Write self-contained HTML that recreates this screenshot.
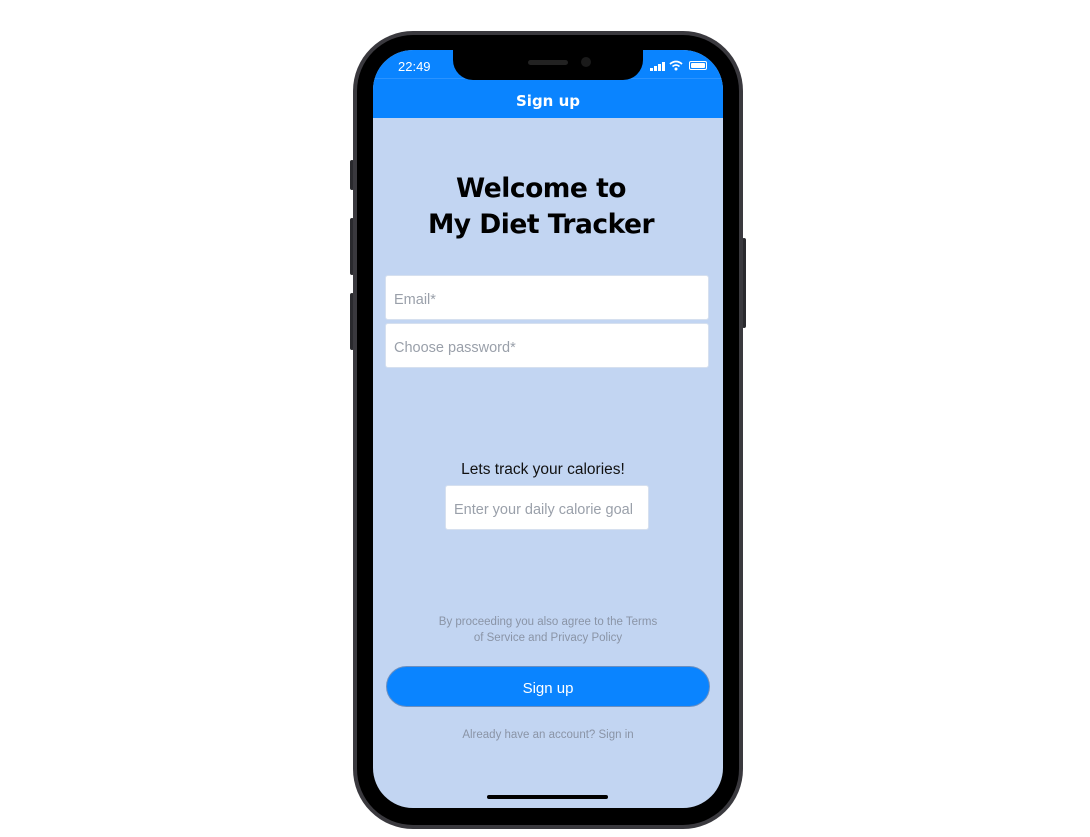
<!DOCTYPE html>
<html><head><meta charset="utf-8"><style>
*{margin:0;padding:0;box-sizing:border-box}
body{width:1090px;height:837px;background:#fff;position:relative;overflow:hidden;font-family:"Liberation Sans",sans-serif}
.btn{position:absolute;background:#2a2a2e;border-radius:2px}
.outer{position:absolute;left:353px;top:31px;width:390px;height:798px;border-radius:60px;background:#3a393e}
.bezel{position:absolute;left:357px;top:35px;width:382px;height:790px;border-radius:56px;background:#000}
.screen{position:absolute;left:373px;top:50px;width:350px;height:758px;border-radius:40px;background:#c2d5f2;overflow:hidden}
.hdr{position:absolute;left:0;top:0;width:350px;height:68px;background:#0a84ff}
.hdr .line{position:absolute;left:0;top:28px;width:350px;height:1px;background:#2b93ff}
.notch{position:absolute;left:80px;top:0;width:190px;height:30px;background:#000;border-radius:0 0 20px 20px}
.spk{position:absolute;left:75px;top:10px;width:40px;height:5px;border-radius:3px;background:#222}
.cam{position:absolute;left:128px;top:7px;width:10px;height:10px;border-radius:50%;background:#1a1a1a}
.time{position:absolute;left:25px;top:9px;color:#fff;font-size:13px}
.title{position:absolute;top:42px;width:350px;text-align:center;color:#fff;font-weight:bold;font-size:15px;font-family:"DejaVu Sans",sans-serif}
h1{position:absolute;top:121px;left:-7px;width:350px;text-align:center;font-family:"DejaVu Sans",sans-serif;font-size:26.5px;line-height:36px;color:#000;font-weight:bold;letter-spacing:-0.5px}
.inp{position:absolute;background:#fff;border:1px solid #d6e0ef;border-radius:3px;color:#9aa0aa;font-size:14.5px;padding-left:8px;padding-top:4px;display:flex;align-items:center}
.small{position:absolute;width:350px;text-align:center;color:#8a94a6;font-size:11.5px;line-height:16px}
.sbtn{position:absolute;left:13px;top:616px;width:324px;height:41px;border-radius:21px;background:#0a84ff;border:1px solid #6b8fc0;color:#fff;font-size:15px;display:flex;align-items:center;justify-content:center;padding-top:3px}
.home{position:absolute;left:114px;top:745px;width:121px;height:4px;border-radius:2px;background:#000}
</style></head><body>
<div class="btn" style="left:350px;top:160px;width:4px;height:30px"></div>
<div class="btn" style="left:350px;top:218px;width:4px;height:57px"></div>
<div class="btn" style="left:350px;top:293px;width:4px;height:57px"></div>
<div class="btn" style="left:742px;top:238px;width:4px;height:90px"></div>
<div class="outer"></div><div class="bezel"></div>
<div class="screen">
 <div class="hdr"><div class="line"></div></div>
 <div class="notch"><div class="spk"></div><div class="cam"></div></div>
 <div class="time">22:49</div>
 <div style="position:absolute;left:277px;top:12px;width:15px;height:9px">
  <div style="position:absolute;left:0;bottom:0;width:3px;height:3px;background:#fff"></div>
  <div style="position:absolute;left:4px;bottom:0;width:3px;height:5px;background:#fff"></div>
  <div style="position:absolute;left:8px;bottom:0;width:3px;height:7px;background:#fff"></div>
  <div style="position:absolute;left:12px;bottom:0;width:3px;height:9px;background:#fff"></div>
 </div>
 <svg style="position:absolute;left:296px;top:10px" width="14" height="11" viewBox="0 0 14 11"><path d="M1 4 Q7 -1 13 4" stroke="#fff" stroke-width="1.8" fill="none"/><path d="M3.5 6.5 Q7 3.5 10.5 6.5" stroke="#fff" stroke-width="1.8" fill="none"/><circle cx="7" cy="9" r="1.5" fill="#fff"/></svg>
 <div style="position:absolute;left:316px;top:11px;width:18px;height:9px;border:1px solid #fff;border-radius:2px;padding:1px"><div style="width:100%;height:100%;background:#fff;border-radius:1px"></div></div>
 <div class="title">Sign up</div>
 <h1>Welcome to<br>My Diet Tracker</h1>
 <div class="inp" style="left:12px;top:225px;width:324px;height:45px">Email*</div>
 <div class="inp" style="left:12px;top:273px;width:324px;height:45px">Choose password*</div>
 <div style="position:absolute;top:411px;left:-5px;width:350px;text-align:center;font-size:15.5px;color:#111">Lets track your calories!</div>
 <div class="inp" style="left:72px;top:435px;width:204px;height:45px;font-size:14.5px">Enter your daily calorie goal</div>
 <div class="small" style="top:564px">By proceeding you also agree to the Terms<br>of Service and Privacy Policy</div>
 <div class="sbtn">Sign up</div>
 <div class="small" style="top:677px">Already have an account? Sign in</div>
 <div class="home"></div>
</div>
</body></html>
